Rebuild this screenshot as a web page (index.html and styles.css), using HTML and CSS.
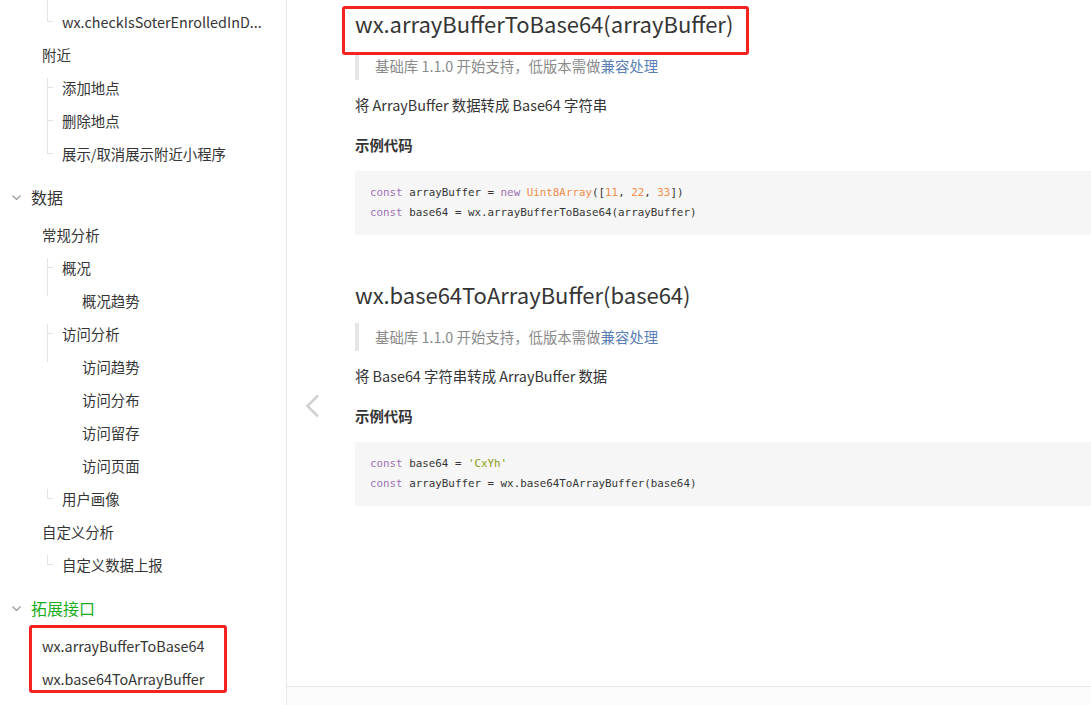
FILE: index.html
```html
<!DOCTYPE html>
<html lang="zh-CN">
<head>
<meta charset="utf-8">
<title>拓展接口</title>
<link rel="stylesheet" href="styles.css">
</head>
<body>
<div class="page">
  <nav class="sidebar">
    <ul class="nav">
      <li class="l3 tl cont last">wx.checkIsSoterEnrolledInD...</li>
      <li class="l2">附近</li>
      <li class="l3 tl">添加地点</li>
      <li class="l3 tl">删除地点</li>
      <li class="l3 tl last">展示/取消展示附近小程序</li>
      <li class="l1"><svg class="chev" width="9" height="5" viewBox="0 0 9 5"><polyline points="0.5,0.5 4.5,4.5 8.5,0.5" fill="none" stroke="#999" stroke-width="1.2"/></svg><span>数据</span></li>
      <li class="l2">常规分析</li>
      <li class="l3 tl">概况</li>
      <li class="l4">概况趋势</li>
      <li class="l3 tl">访问分析</li>
      <li class="l4">访问趋势</li>
      <li class="l4">访问分布</li>
      <li class="l4">访问留存</li>
      <li class="l4">访问页面</li>
      <li class="l3 tl last">用户画像</li>
      <li class="l2">自定义分析</li>
      <li class="l3 tl last">自定义数据上报</li>
      <li class="l1 active"><svg class="chev" width="9" height="5" viewBox="0 0 9 5"><polyline points="0.5,0.5 4.5,4.5 8.5,0.5" fill="none" stroke="#999" stroke-width="1.2"/></svg><span>拓展接口</span></li>
      <li class="group">
        <ul class="hl">
          <li class="l2">wx.arrayBufferToBase64</li>
          <li class="l2">wx.base64ToArrayBuffer</li>
        </ul>
      </li>
    </ul>
  </nav>
  <main class="main">
    <div class="prev"><svg width="15" height="24" viewBox="0 0 15 24"><polyline points="13,1.5 2.5,12 13,22.5" fill="none" stroke="#d2d2d2" stroke-width="2.6"/></svg></div>
    <article class="article">
      <h2><span class="mark">wx.arrayBufferToBase64(arrayBuffer)</span></h2>
      <blockquote class="note">基础库 1.1.0 开始支持，低版本需做<a href="#">兼容处理</a></blockquote>
      <p class="desc">将 ArrayBuffer 数据转成 Base64 字符串</p>
      <h4 class="sample">示例代码</h4>
      <pre class="code"><span class="kw">const</span> arrayBuffer = <span class="kw">new</span> <span class="fn">Uint8Array</span>([<span class="num">11</span>, <span class="num">22</span>, <span class="num">33</span>])
<span class="kw">const</span> base64 = wx.arrayBufferToBase64(arrayBuffer)</pre>

      <h2>wx.base64ToArrayBuffer(base64)</h2>
      <blockquote class="note">基础库 1.1.0 开始支持，低版本需做<a href="#">兼容处理</a></blockquote>
      <p class="desc">将 Base64 字符串转成 ArrayBuffer 数据</p>
      <h4 class="sample">示例代码</h4>
      <pre class="code"><span class="kw">const</span> base64 = <span class="str">'CxYh'</span>
<span class="kw">const</span> arrayBuffer = wx.base64ToArrayBuffer(base64)</pre>
    </article>
    <footer class="footer"></footer>
  </main>
</div>
</body>
</html>
```

FILE: styles.css
```css
html, body {
  margin: 0;
  padding: 0;
  background: #fff;
}
body {
  font-family: "Noto Sans CJK SC", "Noto Sans", sans-serif;
  color: #353535;
  font-size: 14.4px;
}
.page {
  display: flex;
  height: 705px;
  overflow: hidden;
}

/* ---------- sidebar ---------- */
.sidebar {
  width: 286px;
  flex: none;
  border-right: 1px solid #e8e8e8;
  padding-top: 5px;
  overflow: hidden;
}
.nav, .hl {
  list-style: none;
  margin: 0;
  padding: 0;
}
.nav li {
  height: 33px;
  line-height: 33px;
  white-space: nowrap;
  position: relative;
  font-size: 14.4px;
}
.l2 { padding-left: 42px; }
.l3 { padding-left: 62px; }
.l4 { padding-left: 82px; }

.nav li.l1 {
  height: auto;
  display: flex;
  align-items: center;
  padding: 12px 0 5px 12px;
  line-height: 31px;
  font-size: 16px;
}
.chev {
  flex: none;
  margin-right: 10px;
}
.nav li.l1.active { color: #1aad19; }

.tl::before {
  content: "";
  position: absolute;
  left: 47px;
  top: 7px;
  height: 38px;
  border-left: 1px solid #e3e3e3;
}
.tl::after {
  content: "";
  position: absolute;
  left: 47px;
  top: 16px;
  width: 6px;
  border-top: 1px solid #e3e3e3;
}
.tl.last::before { height: 10px; }
.tl.cont::before { top: -6px; height: 23px; }

.nav li.group { height: auto; }
.hl { position: relative; }
.hl::after {
  content: "";
  position: absolute;
  left: 29px;
  width: 198px;
  top: -4px;
  bottom: 2px;
  border: 3px solid #f52222;
  border-radius: 3px;
  box-sizing: border-box;
}

/* ---------- main ---------- */
.main {
  flex: 1;
  min-width: 0;
  display: flex;
  flex-direction: column;
  position: relative;
}
.article {
  flex: 1;
  padding: 8px 0 0 68px;
  overflow: hidden;
}
.footer {
  flex: none;
  height: 18px;
  border-top: 1px solid #e5e5e5;
  background: #fcfcfc;
}
.prev {
  position: absolute;
  left: 18px;
  top: 394px;
  line-height: 0;
}

h2 {
  margin: 0 0 14px;
  font-size: 22px;
  font-weight: 400;
  line-height: 30px;
  color: #353535;
}
.mark {
  display: inline-block;
  position: relative;
}
.mark::after {
  content: "";
  position: absolute;
  left: -13px;
  right: -16px;
  top: -2px;
  bottom: -17px;
  border: 3px solid #f52222;
  border-radius: 3px;
}
.note {
  margin: 0 0 14px;
  border-left: 4px solid #e6e6e6;
  padding-left: 16px;
  line-height: 28px;
  font-size: 14.4px;
  color: #8a8a8a;
}
.note a {
  color: #5a7fb5;
  text-decoration: none;
}
.desc {
  margin: 0 0 18px;
  line-height: 22px;
  font-size: 14.4px;
}
.sample {
  margin: 0 0 15px;
  font-size: 14.4px;
  font-weight: 700;
  line-height: 22px;
}
.code {
  margin: 0 0 44px;
  background: #f6f6f6;
  padding: 12px 15px;
  font-family: "DejaVu Sans Mono", "Liberation Mono", monospace;
  font-size: 10.85px;
  line-height: 20px;
  color: #353535;
  white-space: pre;
}
.kw { color: #a071b5; }
.fn, .num { color: #f08d49; }
.str { color: #8a9d09; }
```
